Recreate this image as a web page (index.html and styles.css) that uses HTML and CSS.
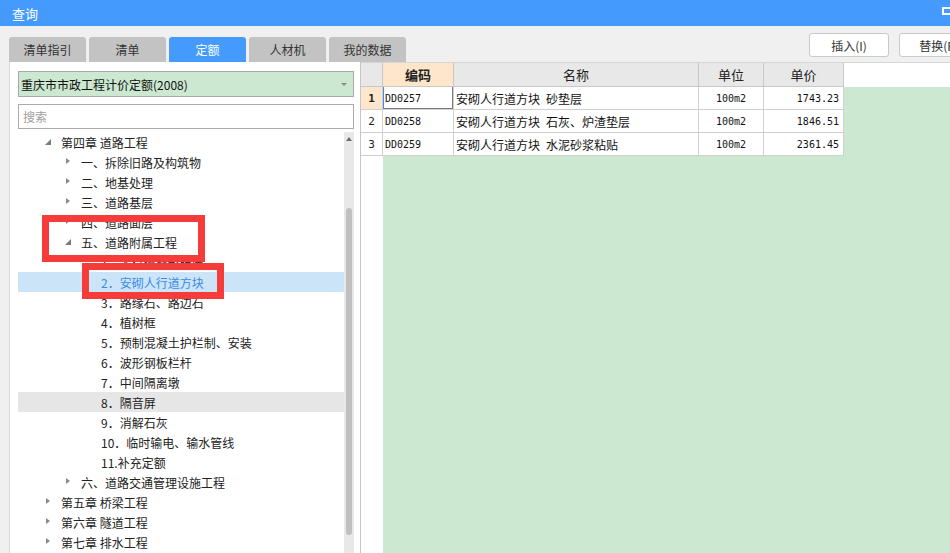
FILE: index.html
```html
<!DOCTYPE html>
<html lang="zh-CN">
<head>
    <meta charset="UTF-8">
    <meta name="viewport" content="width=device-width, initial-scale=1.0">
    <title>查询</title>
    <link rel="stylesheet" href="styles.css">
</head>
<body>
    <div class="titlebar">
        <span class="title">查询</span>
        <span class="max-icon"></span>
    </div>

    <div class="toolbar">
        <div class="tabs">
            <button class="tab">清单指引</button>
            <button class="tab">清单</button>
            <button class="tab active">定额</button>
            <button class="tab">人材机</button>
            <button class="tab">我的数据</button>
        </div>
        <div class="actions">
            <button class="btn">插入(I)</button>
            <button class="btn">替换(R)</button>
        </div>
    </div>

    <div class="main">
        <div class="left">
            <div class="select">
                <span>重庆市市政工程计价定额(2008)</span>
                <i class="caret"></i>
            </div>
            <div class="search">搜索</div>

            <div class="tree">
                <div class="nodes">
                    <div class="node lv1"><i class="tw open"></i><span>第四章 道路工程</span></div>
                    <div class="node lv2"><i class="tw shut"></i><span>一、拆除旧路及构筑物</span></div>
                    <div class="node lv2"><i class="tw shut"></i><span>二、地基处理</span></div>
                    <div class="node lv2"><i class="tw shut"></i><span>三、道路基层</span></div>
                    <div class="node lv2"><i class="tw shut"></i><span>四、道路面层</span></div>
                    <div class="node lv2"><i class="tw open"></i><span>五、道路附属工程</span></div>
                    <div class="node lv3"><i class="tw"></i><span>1．人行道整形碾压</span></div>
                    <div class="node lv3 selected"><i class="tw"></i><span>2．安砌人行道方块</span></div>
                    <div class="node lv3"><i class="tw"></i><span>3．路缘石、路边石</span></div>
                    <div class="node lv3"><i class="tw"></i><span>4．植树框</span></div>
                    <div class="node lv3"><i class="tw"></i><span>5．预制混凝土护栏制、安装</span></div>
                    <div class="node lv3"><i class="tw"></i><span>6．波形钢板栏杆</span></div>
                    <div class="node lv3"><i class="tw"></i><span>7．中间隔离墩</span></div>
                    <div class="node lv3 hover"><i class="tw"></i><span>8．隔音屏</span></div>
                    <div class="node lv3"><i class="tw"></i><span>9．消解石灰</span></div>
                    <div class="node lv3"><i class="tw"></i><span>10．临时输电、输水管线</span></div>
                    <div class="node lv3"><i class="tw"></i><span>11.补充定额</span></div>
                    <div class="node lv2"><i class="tw shut"></i><span>六、道路交通管理设施工程</span></div>
                    <div class="node lv1"><i class="tw shut"></i><span>第五章 桥梁工程</span></div>
                    <div class="node lv1"><i class="tw shut"></i><span>第六章 隧道工程</span></div>
                    <div class="node lv1"><i class="tw shut"></i><span>第七章 排水工程</span></div>
                </div>
                <div class="scrollbar">
                    <i class="up"></i>
                    <div class="thumb"></div>
                </div>
            </div>
        </div>

        <div class="right">
            <div class="grid head">
                <div class="cell"></div>
                <div class="cell key">编码</div>
                <div class="cell">名称</div>
                <div class="cell">单位</div>
                <div class="cell">单价</div>
                <div class="fill"></div>
            </div>
            <div class="grid body">
                <div class="cell num current">1</div>
                <div class="cell code focus">DD0257</div>
                <div class="cell name">安砌人行道方块&ensp;砂垫层</div>
                <div class="cell unit">100m2</div>
                <div class="cell price">1743.23</div>
                <div class="fill"></div>

                <div class="cell num">2</div>
                <div class="cell code">DD0258</div>
                <div class="cell name">安砌人行道方块&ensp;石灰、炉渣垫层</div>
                <div class="cell unit">100m2</div>
                <div class="cell price">1846.51</div>
                <div class="fill"></div>

                <div class="cell num">3</div>
                <div class="cell code">DD0259</div>
                <div class="cell name">安砌人行道方块&ensp;水泥砂浆粘贴</div>
                <div class="cell unit">100m2</div>
                <div class="cell price">2361.45</div>
                <div class="fill"></div>
            </div>
        </div>
    </div>

    <!-- red annotation boxes drawn over the tree -->
    <div class="mark mark-a"></div>
    <div class="mark mark-b"></div>
</body>
</html>
```

FILE: styles.css
```css
body {
    margin: 0;
    width: 950px;
    height: 553px;
    overflow: hidden;
    position: relative;
    background-color: #f0f0f0;
    font-family: "Noto Sans CJK SC", "Liberation Sans", sans-serif;
    font-size: 12px;
    color: #222;
}
button {
    font-family: inherit;
    font-size: 12px;
}
.titlebar {
    height: 26px;
    background-color: #459bfd;
    display: flex;
    align-items: center;
    color: white;
}
.title {
    margin-left: 12px;
    font-size: 13px;
}
.max-icon {
    margin-left: auto;
    margin-right: -4px;
    width: 8px;
    height: 4px;
    border: 2px solid white;
    margin-top: -5px;
}
.toolbar {
    display: flex;
    height: 36px;
}
.tabs {
    display: flex;
    gap: 3px;
    margin-left: 9px;
    margin-top: 11px;
}
.tab {
    width: 77px;
    height: 25px;
    padding: 0;
    border: none;
    border-radius: 3px 3px 0 0;
    background-color: #c3c3c3;
    color: #333;
}
.tab.active {
    background-color: #459bfd;
    color: white;
}
.actions {
    display: flex;
    gap: 10px;
    margin-left: auto;
    margin-right: -29px;
    margin-top: 7px;
}
.btn {
    width: 80px;
    height: 24px;
    padding: 0;
    background-color: white;
    border: 1px solid #c9c9c9;
    border-radius: 3px;
    color: #333;
}
.main {
    display: flex;
    height: 491px;
}
.left {
    width: 352px;
    flex-shrink: 0;
    margin-left: 9px;
    background-color: white;
    border-left: 1px solid #d8d8d8;
    border-right: 1px solid #c6c6c6;
    padding: 9px 6px 0 8px;
    display: flex;
    flex-direction: column;
    box-sizing: border-box;
}
.select {
    height: 26px;
    box-sizing: border-box;
    border: 1px solid #a9a9a9;
    background-color: #cce8d1;
    display: flex;
    align-items: center;
    padding-left: 2px;
    color: #111;
}
.caret {
    margin-left: auto;
    margin-right: 6px;
    border-left: 3px solid transparent;
    border-right: 3px solid transparent;
    border-top: 3px solid #8a8a8a;
}
.search {
    margin-top: 7px;
    height: 25px;
    box-sizing: border-box;
    border: 1px solid #aaaaaa;
    padding-left: 4px;
    line-height: 23px;
    color: #a0a0a0;
}
.tree {
    margin-top: 3px;
    display: flex;
    flex: 1;
    overflow: hidden;
}
.nodes {
    flex: 1;
}
.node {
    height: 20px;
    display: flex;
    align-items: center;
    white-space: nowrap;
}
.node.lv1 { padding-left: 26px; }
.node.lv2 { padding-left: 46px; }
.node.lv3 { padding-left: 66px; }
.node.selected {
    background-color: #cce4f8;
    color: #3a8be4;
}
.node.hover {
    background-color: #e6e6e6;
}
.tw {
    width: 17px;
    height: 20px;
    flex-shrink: 0;
    position: relative;
}
.tw.open::before {
    content: "";
    position: absolute;
    left: 1px;
    top: 7px;
    border-left: 6px solid transparent;
    border-bottom: 6px solid #7a7a7a;
}
.tw.shut::before {
    content: "";
    position: absolute;
    left: 2px;
    top: 6px;
    border-top: 3.5px solid transparent;
    border-bottom: 3.5px solid transparent;
    border-left: 4px solid #8a8a8a;
}
.scrollbar {
    width: 10px;
    background-color: #e8e8e8;
    display: flex;
    flex-direction: column;
    align-items: center;
}
.up {
    margin-top: 5px;
    border-left: 3.5px solid transparent;
    border-right: 3.5px solid transparent;
    border-bottom: 4px solid #6e6e6e;
}
.thumb {
    margin-top: 67px;
    width: 6px;
    height: 327px;
    border-radius: 3px;
    background-color: #c0c0c0;
}
.right {
    flex: 1;
    border-top: 1px solid #d6d6d6;
    background: linear-gradient(to right, white 22px, #cde8d1 22px);
}
.grid {
    display: grid;
    grid-template-columns: 22px 71px 245px 65px 80px 1fr;
}
.head {
    grid-template-rows: 24px;
    background-color: white;
}
.body {
    grid-auto-rows: 23px;
}
.cell {
    box-sizing: border-box;
    border-right: 1px solid #d0d0d0;
    border-bottom: 1px solid #d0d0d0;
    background-color: white;
    display: flex;
    align-items: center;
    white-space: nowrap;
    overflow: hidden;
}
.head .cell {
    background-color: #e8e8e8;
    border-color: #c8c8c8;
    justify-content: center;
    font-size: 13px;
    color: #222;
}
.head .cell.key {
    background-color: #fde6ca;
    font-weight: bold;
}
.num {
    justify-content: center;
    font-family: "DejaVu Sans Mono", monospace;
    font-size: 11px;
}
.num.current {
    background-color: #fde6ca;
    font-weight: bold;
}
.code, .unit, .price {
    font-family: "DejaVu Sans Mono", monospace;
    font-size: 10px;
    color: #111;
}
.code {
    padding-left: 2px;
}
.code.focus {
    box-shadow: inset 1px 0 0 #3d8ef2, inset -1px -1px 0 #7a7a7a;
}
.name {
    padding-left: 2px;
    color: #111;
}
.unit {
    justify-content: center;
}
.price {
    justify-content: flex-end;
    padding-right: 4px;
}
.mark {
    position: absolute;
    box-sizing: border-box;
    border: 7px solid #f63b3b;
}
.mark-a {
    left: 42px;
    top: 215px;
    width: 163px;
    height: 47px;
}
.mark-b {
    left: 82px;
    top: 263px;
    width: 142px;
    height: 36px;
}
```
